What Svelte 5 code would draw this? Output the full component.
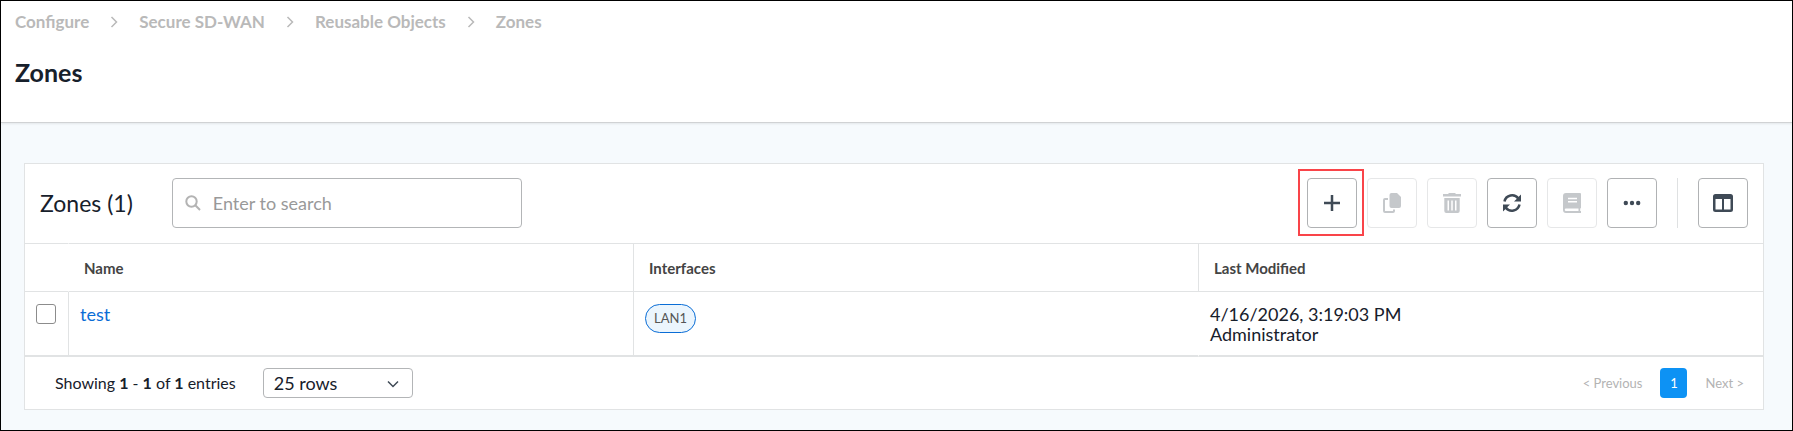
<script lang="ts">
	const crumbs = ['Configure', 'Secure SD-WAN', 'Reusable Objects', 'Zones'];

	const zones = [
		{
			name: 'test',
			interfaces: ['LAN1'],
			modifiedAt: '4/16/2026, 3:19:03 PM',
			modifiedBy: 'Administrator',
		},
	];

	let search = $state('');
	let pageSize = $state('25');
	let selected = $state<string[]>([]);
</script>

<div class="app">
	<header class="page-header">
		<nav class="breadcrumb" aria-label="Breadcrumb">
			{#each crumbs as crumb, i}
				{#if i > 0}
					<svg class="crumb-sep" viewBox="0 0 8 12" aria-hidden="true">
						<path d="M1.5 1 6.5 6 1.5 11" />
					</svg>
				{/if}
				<a href="#{crumb}">{crumb}</a>
			{/each}
		</nav>
		<h1>Zones</h1>
	</header>

	<main>
		<section class="card">
			<div class="toolbar">
				<h2>Zones ({zones.length})</h2>
				<label class="search">
					<svg viewBox="0 0 16 16" aria-hidden="true">
						<circle cx="6.5" cy="6.5" r="5.2" />
						<path d="M10.3 10.3 15 15" />
					</svg>
					<input type="text" placeholder="Enter to search" aria-label="Search" bind:value={search} />
				</label>

				<div class="actions">
					<div class="highlighted">
						<button class="tool" aria-label="Add">
							<svg viewBox="0 0 20 20"><path class="line" d="M10 2v16M2 10h16" /></svg>
						</button>
					</div>
					<button class="tool" aria-label="Clone" disabled>
						<svg viewBox="0 0 20 20">
							<path d="M9.500 0H15l4 4v9a2 2 0 0 1-2 2H9.500a2 2 0 0 1-2-2V2a2 2 0 0 1 2-2Z" />
							<path d="M6 5v2H3v11h8v-1.500h2V18a2 2 0 0 1-2 2H3a2 2 0 0 1-2-2V7a2 2 0 0 1 2-2Z" />
						</svg>
					</button>
					<button class="tool" aria-label="Delete" disabled>
						<svg viewBox="0 0 20 20">
							<path d="M7 0h6l1 1h5v2.500H1V1h5Z" />
							<path
								fill-rule="evenodd"
								d="M2.300 5h15.400v13a2 2 0 0 1-2 2H4.300a2 2 0 0 1-2-2ZM5.500 7.500v10H7v-10ZM9.250 7.500v10h1.500v-10ZM13 7.500v10h1.500v-10Z"
							/>
						</svg>
					</button>
					<button class="tool" aria-label="Refresh">
						<svg viewBox="0 0 20 20">
							<path class="arc" d="M2.500 8.500a7.700 7.700 0 0 1 13.800-3M17.500 11.500a7.700 7.700 0 0 1-13.800 3" />
							<path d="M19 1.500v7h-7l2.600-2.600 1.800-1.800ZM1 18.500v-7h7l-2.600 2.600-1.800 1.800Z" />
						</svg>
					</button>
					<button class="tool" aria-label="Audit log" disabled>
						<svg viewBox="0 0 20 20">
							<path
								fill-rule="evenodd"
								d="M4 0h14a1 1 0 0 1 1 1v13.500a1 1 0 0 1-.8 1v2.500H19v2H4a3 3 0 0 1-3-3V3a3 3 0 0 1 3-3ZM6 4.800v1.400h9V4.800ZM6 8v1.400h9V8ZM4 15.500a1.250 1.250 0 0 0 0 2.500h12.500v-2.500Z"
							/>
						</svg>
					</button>
					<button class="tool" aria-label="More">
						<svg viewBox="0 0 20 20">
							<circle cx="3.800" cy="10" r="2.200" />
							<circle cx="10" cy="10" r="2.200" />
							<circle cx="16.200" cy="10" r="2.200" />
						</svg>
					</button>
					<span class="divider"></span>
					<button class="tool" aria-label="Columns">
						<svg viewBox="0 0 20 20">
							<path
								fill-rule="evenodd"
								d="M2.500 1h15A2.500 2.500 0 0 1 20 3.500v13a2.500 2.500 0 0 1-2.500 2.500h-15A2.500 2.500 0 0 1 0 16.500v-13A2.500 2.500 0 0 1 2.500 1ZM2.500 6v10.500H9V6ZM11 6v10.500h6.500V6Z"
							/>
						</svg>
					</button>
				</div>
			</div>

			<table>
				<thead>
					<tr>
						<th class="check" aria-label="Select"></th>
						<th>Name</th>
						<th>Interfaces</th>
						<th>Last Modified</th>
					</tr>
				</thead>
				<tbody>
					{#each zones as zone}
						<tr>
							<td class="check">
								<input
									type="checkbox"
									value={zone.name}
									aria-label="Select {zone.name}"
									bind:group={selected}
								/>
							</td>
							<td><a href="#{zone.name}">{zone.name}</a></td>
							<td>
								{#each zone.interfaces as name}
									<span class="tag">{name}</span>
								{/each}
							</td>
							<td>
								<div>{zone.modifiedAt}</div>
								<div>{zone.modifiedBy}</div>
							</td>
						</tr>
					{/each}
				</tbody>
			</table>

			<footer>
				<p>Showing <b>1</b> - <b>1</b> of <b>1</b> entries</p>
				<div class="page-size">
					<select aria-label="Rows per page" bind:value={pageSize}>
						<option value="25">25 rows</option>
						<option value="50">50 rows</option>
						<option value="100">100 rows</option>
					</select>
					<svg viewBox="0 0 12 8" aria-hidden="true"><path d="M1 1.500 6 6.500 11 1.500" /></svg>
				</div>
				<nav class="pager" aria-label="Pagination">
					<button disabled>&lt; Previous</button>
					<button class="current" aria-current="page">1</button>
					<button disabled>Next &gt;</button>
				</nav>
			</footer>
		</section>
	</main>
</div>

<style>
	:global(body) {
		background: #f6fafd;
	}

	.app {
		box-sizing: border-box;
		min-height: 100vh;
		border: 1px solid #000;
		background: #f6fafd;
		color: #17202b;
		font-family: Lato, 'Liberation Sans', sans-serif;
		font-size: 18px;
		line-height: 20px;
	}

	.page-header {
		padding: 11px 14px 34px;
		border-bottom: 1px solid #d0d2d4;
		background: #fff;
		box-shadow: 0 1px 2px rgba(0, 0, 0, 0.08);
	}

	.breadcrumb {
		display: flex;
		align-items: center;
		gap: 21px;
	}

	.breadcrumb a {
		color: #b9b9b9;
		font-size: 17px;
		font-weight: 700;
		text-decoration: none;
	}

	.crumb-sep {
		width: 8px;
		height: 12px;
		fill: none;
		stroke: #b9b9b9;
		stroke-width: 1.5;
	}

	h1 {
		margin: 24px 0 0;
		font-size: 25px;
		font-weight: 700;
		line-height: 32px;
	}

	main {
		padding: 40px 28px 20px 23px;
	}

	.card {
		border: 1px solid #e1e3e4;
		background: #fff;
	}

	.toolbar {
		display: flex;
		align-items: center;
		padding: 14px 15px 15px;
	}

	h2 {
		margin: 0 39px 0 0;
		font-size: 23px;
		font-weight: 400;
		line-height: 30px;
	}

	.search {
		box-sizing: border-box;
		display: flex;
		align-items: center;
		gap: 12px;
		width: 350px;
		height: 50px;
		padding: 0 12px;
		border: 1px solid #b3b5b7;
		border-radius: 4px;
	}

	.search svg {
		width: 16px;
		height: 16px;
		fill: none;
		stroke: #b3b3b3;
		stroke-width: 2;
	}

	.search input {
		flex: 1;
		min-width: 0;
		height: 24px;
		padding: 0;
		border: none;
		outline: none;
		background: none;
		color: inherit;
		font: inherit;
	}

	.search input::placeholder {
		color: #999;
	}

	.actions {
		display: flex;
		gap: 10px;
		margin-left: auto;
	}

	.highlighted {
		position: relative;
	}

	.highlighted::after {
		content: '';
		position: absolute;
		inset: -9px -7px -8px -9px;
		border: 2px solid #f94449;
		pointer-events: none;
	}

	.tool {
		display: flex;
		align-items: center;
		justify-content: center;
		width: 50px;
		height: 50px;
		padding: 0;
		border: 1px solid #b0b2b4;
		border-radius: 4px;
		background: #fff;
		color: #3f4a56;
	}

	.tool:disabled {
		border-color: #e6e7e8;
		color: #c5c8cb;
	}

	.tool svg {
		width: 20px;
		height: 20px;
		fill: currentColor;
	}

	.tool .line,
	.tool .arc {
		fill: none;
		stroke: currentColor;
		stroke-width: 2.5;
	}

	.divider {
		width: 1px;
		margin: 0 10px;
		background: #dfe1e2;
	}

	table {
		width: 100%;
		border-collapse: separate;
		border-spacing: 0;
		table-layout: fixed;
	}

	th {
		box-sizing: border-box;
		height: 49px;
		padding: 0 15px;
		border: 0 solid #e1e3e4;
		border-width: 1px 0 1px 1px;
		color: #444;
		font-size: 15px;
		font-weight: 700;
		text-align: left;
	}

	td {
		height: 40px;
		padding: 12px 11px 11px;
		border: 0 solid #e1e3e4;
		border-width: 0 0 2px 1px;
		vertical-align: top;
	}

	th:nth-child(2),
	td:nth-child(4) {
		border-left-color: transparent;
	}

	.check {
		box-sizing: border-box;
		width: 43px;
		padding-right: 0;
		border-left: none;
	}

	.check input {
		appearance: none;
		display: block;
		box-sizing: border-box;
		width: 20px;
		height: 20px;
		margin: 0;
		border: 1px solid #8c8c8c;
		border-radius: 3px;
		background: #fff;
	}

	.check input:checked {
		background: #0a6dd6;
	}

	td a {
		color: #0a6dd6;
		text-decoration: none;
	}

	.tag {
		display: inline-block;
		padding: 3px 8px 4px;
		border: 1px solid #0a6dd6;
		border-radius: 15px;
		background: #ebf5fd;
		color: #555;
		font-size: 13px;
	}

	footer {
		display: flex;
		align-items: center;
		padding: 11px 15px 11px 30px;
		font-size: 16px;
	}

	footer p {
		margin: 0 27px 0 0;
	}

	.page-size {
		position: relative;
	}

	.page-size select {
		appearance: none;
		display: block;
		width: 150px;
		height: 30px;
		padding: 0 10px;
		border: 1px solid #b3b5b7;
		border-radius: 4px;
		background: #fff;
		color: inherit;
		font: inherit;
		font-size: 18px;
	}

	.page-size svg {
		position: absolute;
		top: 12px;
		right: 14px;
		width: 12px;
		height: 8px;
		fill: none;
		stroke: #3f4a56;
		stroke-width: 1.5;
		pointer-events: none;
	}

	.pager {
		display: flex;
		gap: 14px;
		margin-left: auto;
	}

	.pager button {
		height: 30px;
		padding: 0 4px;
		border: none;
		background: none;
		font-family: inherit;
		font-size: 13px;
	}

	.pager button:disabled {
		color: #b3b3b3;
	}

	.pager .current {
		width: 27px;
		border-radius: 4px;
		background: #0d92f4;
		color: #fff;
	}
</style>
